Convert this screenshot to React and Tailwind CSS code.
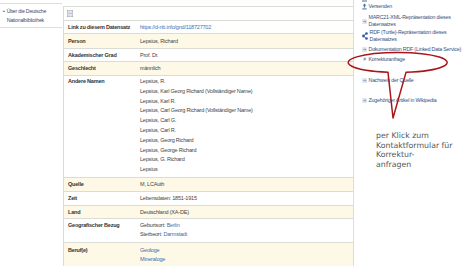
import React from 'react';

const rows = [
  { label: 'Link zu diesem Datensatz', h: 'h-[13px] items-center', values: [{ text: 'https://d-nb.info/gnd/118727702', link: true }] },
  { label: 'Person', h: 'h-[15px] items-center bg-[#fdf9e6]', values: ['Lepsius, Richard'] },
  { label: 'Akademischer Grad', h: 'h-[13px] items-center', values: ['Prof. Dr.'] },
  { label: 'Geschlecht', h: 'h-[14px] items-center bg-[#fdf9e6]', values: ['männlich'] },
  {
    label: 'Andere Namen',
    h: 'h-[102px] items-start pt-[1px] leading-[9.8px]',
    values: [
      'Lepsius, R.',
      'Lepsius, Karl Georg Richard (Vollständiger Name)',
      'Lepsius, Karl R.',
      'Lepsius, Carl Georg Richard (Vollständiger Name)',
      'Lepsius, Carl G.',
      'Lepsius, Carl R.',
      'Lepsius, Georg Richard',
      'Lepsius, George Richard',
      'Lepsius, G. Richard',
      'Lepsius',
    ],
  },
  { label: 'Quelle', h: 'h-[14px] items-center bg-[#fdf9e6]', values: ['M, LCAuth'] },
  { label: 'Zeit', h: 'h-[14px] items-center', values: ['Lebensdaten: 1851-1915'] },
  { label: 'Land', h: 'h-[13px] items-center bg-[#fdf9e6]', values: ['Deutschland (XA-DE)'] },
  {
    label: 'Geografischer Bezug',
    h: 'h-[24px] items-start pt-[1.5px] leading-[9px]',
    values: [
      [{ text: 'Geburtsort: ' }, { text: 'Berlin', link: true }],
      [{ text: 'Sterbeort: ' }, { text: 'Darmstadt', link: true }],
    ],
  },
  {
    label: 'Beruf(e)',
    h: 'h-[30px] items-start pt-[2.5px] leading-[9px] bg-[#fdf9e6]',
    values: [{ text: 'Geologe', link: true }, { text: 'Mineraloge', link: true }],
  },
];

function Part({ part }) {
  if (typeof part === 'string') return <span>{part}</span>;
  return <span className={part.link ? 'text-[#3f6db3]' : ''}>{part.text}</span>;
}

function ArrowBox() {
  return (
    <svg width="5" height="5" viewBox="0 0 5 5" className="shrink-0">
      <rect x="0" y="0" width="5" height="5" fill="#e3e7ee" />
      <path d="M1 2.5h3M2.8 1.3l1.2 1.2-1.2 1.2" stroke="#8a9ab5" strokeWidth="0.7" fill="none" />
    </svg>
  );
}

const sideLinks = [
  { mt: 'mt-[1px]', icon: 'send', lines: ['Versenden'] },
  { mt: 'mt-[4px]', icon: 'arrow', lines: ['MARC21-XML-Repräsentation dieses', 'Datensatzes'] },
  { mt: 'mt-[1px]', icon: 'share', lines: ['RDF (Turtle)-Repräsentation dieses', 'Datensatzes'] },
  { mt: 'mt-[3px]', icon: 'arrow', lines: ['Dokumentation RDF (Linked Data Service)'] },
  { mt: 'mt-[3px]', icon: 'hash', lines: ['Korrekturanfrage'] },
  { mt: 'mt-[14px]', icon: 'arrow', lines: ['Nachweis der Quelle'] },
  { mt: 'mt-[13px]', icon: 'arrow', lines: ['Zugehöriger Artikel in Wikipedia'] },
];

function SideIcon({ kind }) {
  if (kind === 'send') {
    return (
      <svg width="5" height="7" viewBox="0 0 5 7" className="shrink-0">
        <path d="M2.5 0.5L4.3 2.6H3.2V4.4H1.8V2.6H0.7Z" fill="#4d6fa8" />
        <rect x="0.3" y="5.2" width="4.4" height="1.4" fill="#7c93bd" />
      </svg>
    );
  }
  if (kind === 'share') {
    return (
      <svg width="6" height="8" viewBox="0 0 6 8" className="shrink-0">
        <path d="M4.5 1.5L1.5 4L4.5 6.5" stroke="#3f66a8" strokeWidth="0.8" fill="none" />
        <circle cx="4.5" cy="1.5" r="1.3" fill="#2f5aa0" />
        <circle cx="1.5" cy="4" r="1.4" fill="#2f5aa0" />
        <circle cx="4.5" cy="6.5" r="1.3" fill="#2f5aa0" />
      </svg>
    );
  }
  if (kind === 'hash') {
    return <span className="w-[5px] shrink-0 text-center text-[5px] text-[#6a7fa6]">#</span>;
  }
  return <ArrowBox />;
}

export default function App() {
  return (
    <div className="relative flex h-[266px] w-[474px] overflow-hidden bg-white font-['Liberation_Sans',Arial,sans-serif] text-[5.5px] tracking-[-0.2px]">
      <aside className="w-[62px] shrink-0 pt-[3px]">
        <div className="flex gap-[2px] border-y border-[#dedede] pb-[2px] pl-[3px] pt-[2.5px] text-[5.2px] leading-[9px] text-[#3e4c6e]">
          <span>•</span>
          <span>
            Über die Deutsche
            <br />
            Nationalbibliothek
          </span>
        </div>
      </aside>

      <main className="ml-[1px] w-[290px] shrink-0 pt-[6px]">
        <div className="border-l border-t border-[#dcdcd6]">
          <div className="flex h-[14px] items-center border-b border-[#dcdcd6] pl-[3px]">
            <svg width="6" height="7" viewBox="0 0 6 7">
              <rect x="0.3" y="0.3" width="5.4" height="6.4" fill="none" stroke="#9aa3b0" strokeWidth="0.6" />
              <path d="M1 2h4M1 3.5h4M1 5h4" stroke="#9aa3b0" strokeWidth="0.6" />
            </svg>
          </div>
          {rows.map((row) => (
            <div key={row.label} className={`flex border-b border-[#dcdcd6] ${row.h}`}>
              <div className="w-[75px] shrink-0 pl-[4px] font-bold text-[#333333]">{row.label}</div>
              <div className="flex flex-col pl-[1px] text-[#444444]">
                {row.values.map((value, index) => (
                  <div key={index}>
                    {Array.isArray(value) ? value.map((part, i) => <Part key={i} part={part} />) : <Part part={value} />}
                  </div>
                ))}
              </div>
            </div>
          ))}
        </div>
      </main>

      <aside className="flex flex-1 flex-col border-l border-[#dcdcdc] pl-[8px] text-[5.3px] leading-[7px] text-[#34507f]">
        <div className="h-[2px] w-[5px] bg-[#a7b4cb]" />
        {sideLinks.map((item) => (
          <div key={item.lines[0]} className={`flex items-center gap-[1.5px] ${item.mt}`}>
            <SideIcon kind={item.icon} />
            <div>
              {item.lines.map((line) => (
                <div key={line}>{line}</div>
              ))}
            </div>
          </div>
        ))}
        <p className="mt-[27px] pl-[14px] font-['DejaVu_Sans',sans-serif] text-[7.8px] leading-[9.5px] tracking-normal text-[#555555]">
          per Klick zum
          <br />
          Kontaktformular für
          <br />
          Korrektur-
          <br />
          anfragen
        </p>
      </aside>

      <svg className="pointer-events-none absolute left-0 top-0" width="474" height="266" viewBox="0 0 474 266">
        <path
          d="M406 72.35 A49.5 10 0 1 0 388 72.3 L393 118 Z"
          fill="none"
          stroke="#a8161d"
          strokeWidth="1.5"
          strokeLinejoin="round"
        />
      </svg>
    </div>
  );
}
